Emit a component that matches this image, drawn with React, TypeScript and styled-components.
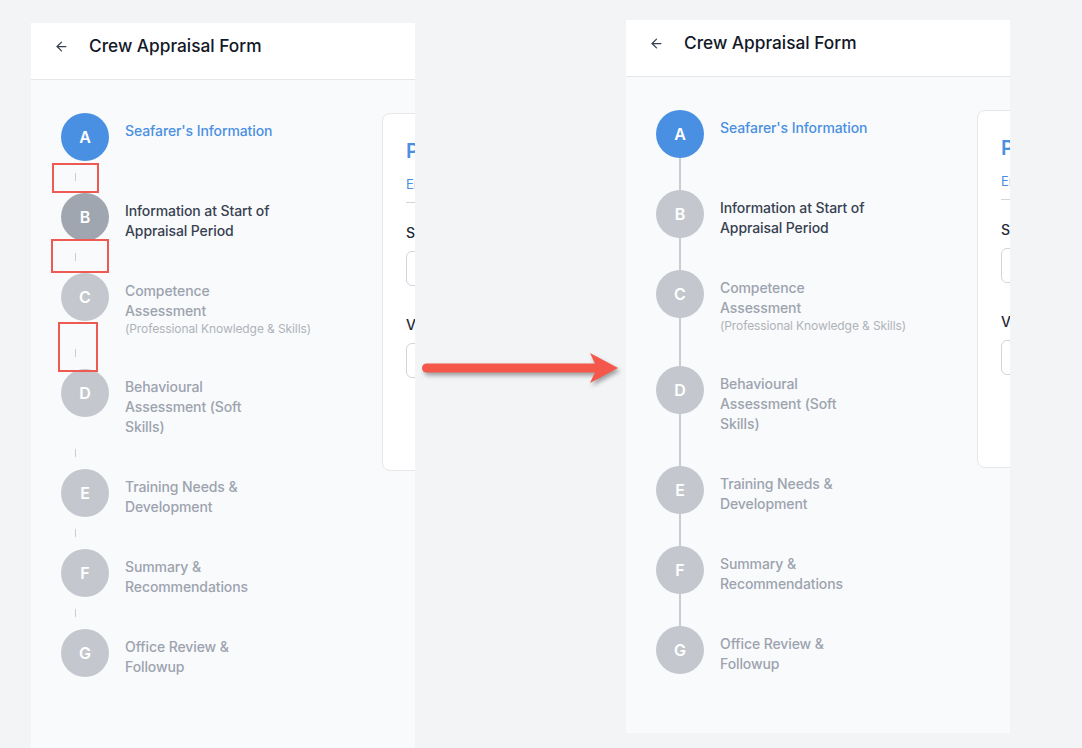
import React from 'react'
import styled, { createGlobalStyle } from 'styled-components'
import { ArrowLeft } from 'lucide-react'

const GlobalStyle = createGlobalStyle`
  html, body {
    margin: 0;
    padding: 0;
    height: 100%;
    overflow: hidden;
  }
  body {
    background: #f3f4f6;
    font-family: Inter, "Noto Sans", "Liberation Sans", sans-serif;
    -webkit-font-smoothing: antialiased;
  }
`

type Tone = 'active' | 'next' | 'idle'

const steps = [
    { letter: 'A', title: "Seafarer's Information" },
    { letter: 'B', title: 'Information at Start of Appraisal Period' },
    { letter: 'C', title: 'Competence Assessment', note: '(Professional Knowledge & Skills)' },
    { letter: 'D', title: 'Behavioural Assessment (Soft Skills)' },
    { letter: 'E', title: 'Training Needs & Development' },
    { letter: 'F', title: 'Summary & Recommendations' },
    { letter: 'G', title: 'Office Review & Followup' },
]

const Canvas = styled.div`
    display: flex;
    align-items: flex-start;
    padding-left: 31px;
    height: 748px;
`

const Shot = styled.div<{ $top: number; $height: number }>`
    position: relative;
    flex: 0 0 384px;
    margin-top: ${p => p.$top}px;
    height: ${p => p.$height}px;
    display: flex;
    flex-direction: column;
    background: #f9fafb;
    overflow: hidden;
`

const Header = styled.header`
    flex: 0 0 57px;
    box-sizing: border-box;
    display: flex;
    align-items: flex-start;
    gap: 20px;
    padding: 9px 23px 0;
    background: #fff;
    border-bottom: 1px solid #e5e7eb;
`

const BackButton = styled.span`
    display: flex;
    align-items: center;
    height: 28px;
    color: #374151;
`

const Title = styled.h1`
    margin: 0;
    font-size: 17.3px;
    line-height: 28px;
    font-weight: 500;
    color: #111827;
`

const Body = styled.div`
    flex: 1;
    display: flex;
    align-items: flex-start;
    gap: 24px;
    padding: 33px 0 0 30px;
`

const Stepper = styled.ol`
    flex: 0 0 297px;
    margin: 0;
    padding: 0;
    list-style: none;
`

const Step = styled.li`
    display: grid;
    grid-template-columns: 48px 1fr;
    column-gap: 16px;
`

const Rail = styled.div`
    display: flex;
    flex-direction: column;
    align-items: center;
`

const badgeColors: Record<Tone, string> = {
    active: '#4a90e2',
    next: '#a0a6b0',
    idle: '#c4c8ce',
}

const Badge = styled.div<{ $tone: Tone }>`
    flex: 0 0 48px;
    width: 48px;
    height: 48px;
    border-radius: 50%;
    display: flex;
    align-items: center;
    justify-content: center;
    background: ${p => badgeColors[p.$tone]};
    color: #fff;
    font-size: 16px;
    font-weight: 600;
`

const Line = styled.div`
    flex: 1;
    min-height: 32px;
    width: 2px;
    background: #c9cdd3;
`

const Label = styled.div<{ $gap: number }>`
    padding: 8px 0 ${p => p.$gap}px;
`

const labelColors: Record<Tone, string> = {
    active: '#4a90e2',
    next: '#374151',
    idle: '#9ca3af',
}

const StepTitle = styled.div<{ $tone: Tone }>`
    max-width: 156px;
    font-size: 14px;
    line-height: 20px;
    font-weight: 500;
    letter-spacing: -0.1px;
    color: ${p => labelColors[p.$tone]};
`

const StepNote = styled.div`
    font-size: 12px;
    line-height: 16px;
    letter-spacing: -0.1px;
    color: #aeb3ba;
    white-space: nowrap;
`

const DashGap = styled.div`
    height: 32px;
    display: flex;
    align-items: center;
    padding-left: 14px;
`

const Dash = styled.div`
    width: 1px;
    height: 8px;
    background: #c9cdd3;
`

const Card = styled.section`
    flex: 0 0 520px;
    box-sizing: border-box;
    min-height: 358px;
    padding: 23px;
    background: #fff;
    border: 1px solid #e5e7eb;
    border-radius: 8px;
`

const CardHead = styled.div`
    padding-bottom: 8px;
    border-bottom: 1px solid #d1d5db;
`

const CardTitle = styled.h2`
    margin: 0;
    font-size: 20px;
    line-height: 28px;
    font-weight: 600;
    color: #4a90e2;
`

const CardSub = styled.p`
    margin: 9px 0 0;
    font-size: 13px;
    line-height: 20px;
    color: #4a90e2;
`

const Field = styled.div<{ $space: number }>`
    margin-top: ${p => p.$space}px;
`

const FieldLabel = styled.label`
    display: block;
    margin-bottom: 8px;
    font-size: 14px;
    line-height: 20px;
    font-weight: 500;
    color: #1f2937;
`

const Input = styled.input`
    display: block;
    box-sizing: border-box;
    width: 100%;
    height: 35px;
    border: 1px solid #d1d5db;
    border-radius: 6px;
    background: #fff;
`

const ArrowWrap = styled.div`
    flex: 0 0 211px;
    margin-top: 348px;
    display: flex;
`

const Mark = styled.div<{ $x: number; $y: number; $w: number; $h: number }>`
    position: absolute;
    left: ${p => p.$x}px;
    top: ${p => p.$y}px;
    width: ${p => p.$w}px;
    height: ${p => p.$h}px;
    box-sizing: border-box;
    border: 2px solid #ee5a52;
`

const toneFor = (i: number, fixed: boolean): Tone => {
    if (i === 0) return 'active'
    if (i === 1) return fixed ? 'idle' : 'next'
    return 'idle'
}

const Steps = ({ fixed }: { fixed: boolean }) => (
    <Stepper>
        {steps.map((s, i) => {
            const last = i === steps.length - 1
            const tone = toneFor(i, fixed)
            const textTone: Tone = i === 0 ? 'active' : i === 1 ? 'next' : 'idle'
            const label = (
                <Label $gap={fixed && !last ? 32 : 0}>
                    <StepTitle $tone={textTone}>{s.title}</StepTitle>
                    {s.note && <StepNote>{s.note}</StepNote>}
                </Label>
            )
            if (fixed) {
                return (
                    <Step key={s.letter}>
                        <Rail>
                            <Badge $tone={tone}>{s.letter}</Badge>
                            {!last && <Line />}
                        </Rail>
                        {label}
                    </Step>
                )
            }
            return (
                <React.Fragment key={s.letter}>
                    <Step>
                        <Rail>
                            <Badge $tone={tone}>{s.letter}</Badge>
                        </Rail>
                        {label}
                    </Step>
                    {!last && (
                        <DashGap>
                            <Dash />
                        </DashGap>
                    )}
                </React.Fragment>
            )
        })}
    </Stepper>
)

const FormScreen = ({ fixed, top, height }: { fixed: boolean; top: number; height: number }) => (
    <Shot $top={top} $height={height}>
        <Header>
            <BackButton>
                <ArrowLeft size={15} strokeWidth={2} />
            </BackButton>
            <Title>Crew Appraisal Form</Title>
        </Header>
        <Body>
            <Steps fixed={fixed} />
            <Card>
                <CardHead>
                    <CardTitle>Personal Details</CardTitle>
                    <CardSub>Enter the seafarer's personal information</CardSub>
                </CardHead>
                <Field $space={20}>
                    <FieldLabel>Seafarer Name</FieldLabel>
                    <Input readOnly />
                </Field>
                <Field $space={29}>
                    <FieldLabel>Vessel Name</FieldLabel>
                    <Input readOnly />
                </Field>
            </Card>
        </Body>
        {!fixed && (
            <>
                <Mark $x={21} $y={140} $w={47} $h={30} />
                <Mark $x={20} $y={216} $w={58} $h={34} />
                <Mark $x={27} $y={299} $w={40} $h={50} />
            </>
        )}
    </Shot>
)

const BigArrow = () => (
    <svg width="211" height="40" viewBox="0 0 211 40" style={{ filter: 'drop-shadow(2px 3px 2px rgba(0,0,0,0.35))' }}>
        <rect x="7" y="15.5" width="180" height="9" rx="4.5" fill="#f5574b" />
        <path d="M175 5 L203 20 L175 35 L182 20 Z" fill="#f5574b" />
    </svg>
)

export default function App() {
    return (
        <>
            <GlobalStyle />
            <Canvas>
                <FormScreen fixed={false} top={23} height={730} />
                <ArrowWrap>
                    <BigArrow />
                </ArrowWrap>
                <FormScreen fixed top={20} height={713} />
            </Canvas>
        </>
    )
}
